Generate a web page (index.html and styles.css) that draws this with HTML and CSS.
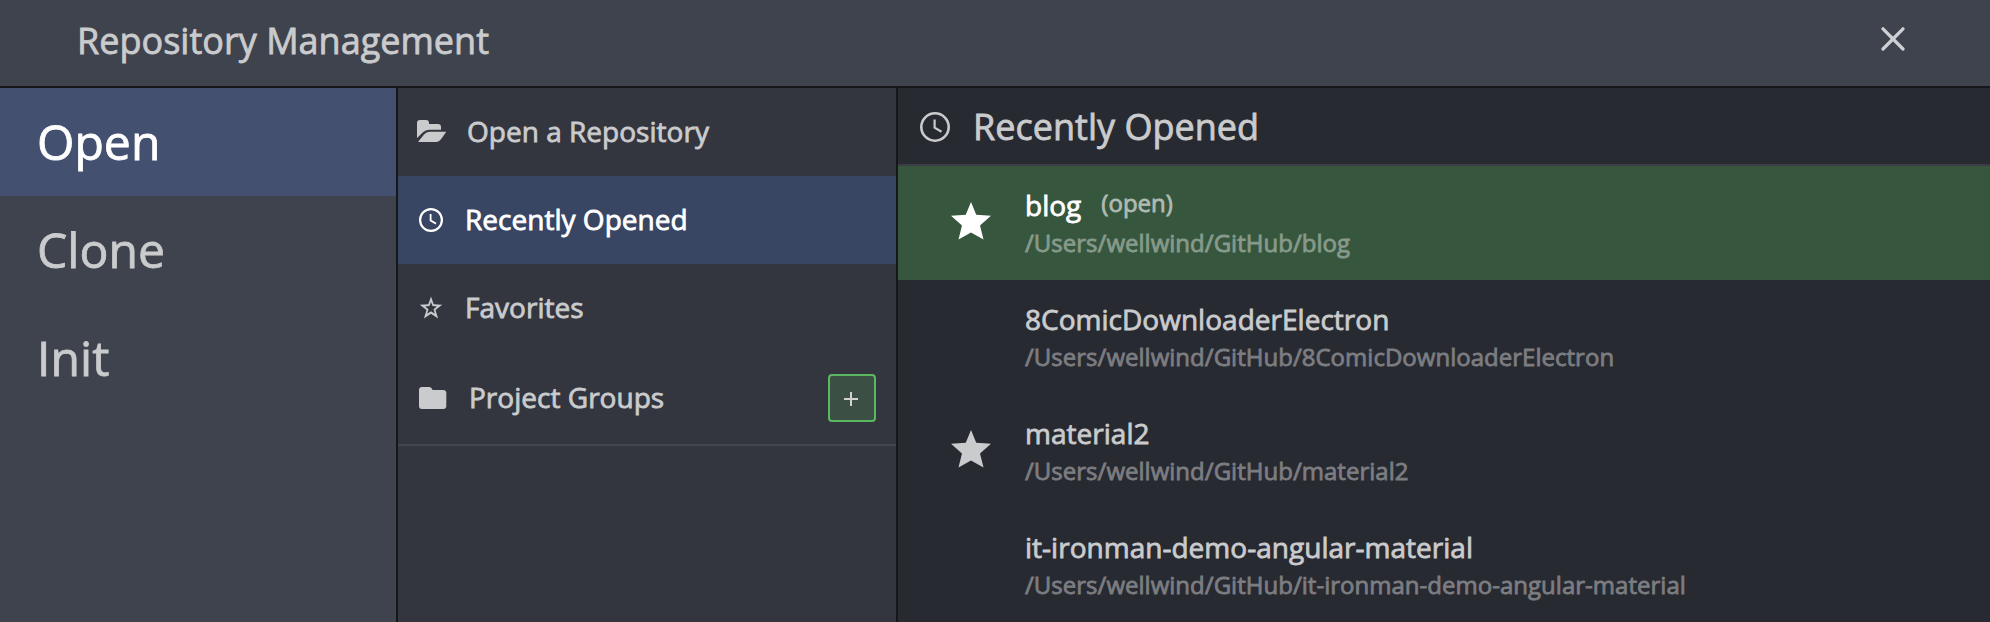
FILE: index.html
```
<!DOCTYPE html>
<html lang="en">
<head>
<meta charset="utf-8">
<title>Repository Management</title>
<link rel="stylesheet" href="styles.css">
</head>
<body>
<div class="app">
  <header class="header">
    <h1 class="title">Repository Management</h1>
    <svg class="close" width="24" height="25" viewBox="0 0 24 25"><path d="M2 1.800 22 22M22 1.800 2 22"/></svg>
  </header>
  <div class="body">
    <nav class="modes">
      <div class="mode active">Open</div>
      <div class="mode">Clone</div>
      <div class="mode">Init</div>
    </nav>
    <nav class="menu">
      <div class="item item-open">
        <svg class="solid icon-open" width="30" height="22" viewBox="0 0 30 22"><path d="M0 18V3Q0 0 3 0H9Q12 0 12 3V4H21Q24 4 24 7V9.700H12Q8.500 9.700 6 12.200L0 18Z"/><path d="M1 22 7 14.500Q9.500 11.800 12.500 11.800H29.300L24.500 18.500Q22 22 19 22Z"/></svg>
        <span>Open a Repository</span>
      </div>
      <div class="item active">
        <svg class="line icon-clock" width="24" height="24" viewBox="0 0 24 24"><circle cx="12" cy="12" r="10.900"/><path class="hands" d="M11.600 6V12.500L17 15.600"/></svg>
        <span>Recently Opened</span>
      </div>
      <div class="item">
        <svg class="solid icon-fav" width="24" height="24" viewBox="0 0 24 24"><path fill-rule="evenodd" d="M12 0.500 14.700 8.200 23.200 8.700 16.500 14 19.100 22.500 12 17.700 4.900 22.500 7.500 14 0.800 8.700 9.300 8.200ZM12 6 10.500 10.100 6.100 10.400 9.500 13.200 8.200 17.700 12 15.200 15.800 17.700 14.500 13.200 17.900 10.400 13.500 10.100Z"/></svg>
        <span>Favorites</span>
      </div>
      <div class="item groups">
        <svg class="solid icon-folder" width="28" height="22" viewBox="0 0 28 22"><path d="M3 0H10Q12.500 0 13.500 3H24Q27.300 3 27.300 6V19Q27.300 22 24.300 22H3Q0 22 0 19V3Q0 0 3 0Z"/></svg>
        <span>Project Groups</span>
        <button class="add" aria-label="Add group"><svg width="14" height="14" viewBox="0 0 14 14"><path d="M7 0V14M0 7H14"/></svg></button>
      </div>
    </nav>
    <main class="content">
      <div class="heading">
        <svg class="line icon-clock-lg" width="30" height="30" viewBox="0 0 30 30"><circle cx="15" cy="15" r="13.700"/><path class="hands" d="M14.600 7.500V15.600L21.500 19.800"/></svg>
        <h2>Recently Opened</h2>
      </div>
      <div class="repo current">
        <div class="mark"><svg class="solid" width="40" height="38" viewBox="0 0 39 38" preserveAspectRatio="none"><path d="M19.500 0 24.600 12.800 39 13.800 28.300 23.500 31.700 37.500 19.500 30.400 7.300 37.500 10.700 23.500 0 13.800 14.400 12.800Z"/></svg></div>
        <div class="info"><div class="name">blog<span class="state">(open)</span></div><div class="path">/Users/wellwind/GitHub/blog</div></div>
      </div>
      <div class="repo">
        <div class="mark"></div>
        <div class="info"><div class="name">8ComicDownloaderElectron</div><div class="path">/Users/wellwind/GitHub/8ComicDownloaderElectron</div></div>
      </div>
      <div class="repo">
        <div class="mark"><svg class="solid" width="40" height="38" viewBox="0 0 39 38" preserveAspectRatio="none"><path d="M19.500 0 24.600 12.800 39 13.800 28.300 23.500 31.700 37.500 19.500 30.400 7.300 37.500 10.700 23.500 0 13.800 14.400 12.800Z"/></svg></div>
        <div class="info"><div class="name">material2</div><div class="path">/Users/wellwind/GitHub/material2</div></div>
      </div>
      <div class="repo">
        <div class="mark"></div>
        <div class="info"><div class="name">it-ironman-demo-angular-material</div><div class="path">/Users/wellwind/GitHub/it-ironman-demo-angular-material</div></div>
      </div>
    </main>
  </div>
</div>
</body>
</html>
```
FILE: styles.css
```
* { box-sizing: border-box; }
body {
  margin: 0;
  font-family: "Open Sans", "Noto Sans", sans-serif;
  color: #cacbcd;
  -webkit-text-stroke: 0.8px currentColor;
  letter-spacing: 0.02px;
  white-space: nowrap;
}
h1, h2 { margin: 0; font-size: 36px; font-weight: 400; }
svg { display: block; flex: none; }
.solid { fill: currentColor; }
.line { fill: none; stroke: currentColor; stroke-width: 2.2; }
.hands { stroke-width: 1.8; }
.app { display: flex; flex-direction: column; height: 622px; overflow: hidden; background: #3f434e; }

.header { display: flex; justify-content: space-between; height: 88px; padding: 0 85px 0 77px; border-bottom: 2px solid #15171b; }
.title { line-height: 82px; }
.close { margin-top: 27px; fill: none; stroke: #cfd0d3; stroke-width: 3.2; stroke-linecap: round; }

.body { display: flex; flex: 1; min-height: 0; }
.modes { width: 398px; border-right: 2px solid #15171b; }
.mode { height: 108px; padding-left: 37px; font-size: 48.1px; line-height: 108px; }
.mode.active { background: #435070; color: #fff; }

.menu { width: 500px; background: #34363f; border-right: 2px solid #15171b; }
.item { display: flex; height: 88px; padding-left: 21px; font-size: 28px; line-height: 86px; }
.item.active { background: #384663; color: #fff; }
.icon-open { margin: 32px 20px 0 -2px; }
.icon-clock { margin: 31.500px 22px 0 0; }
.icon-fav { margin: 31.500px 22px 0 0; }
.icon-folder { margin: 35px 22px 0 0; }
.groups { height: 94px; padding-right: 20px; line-height: 90px; border-bottom: 2px solid #43454f; }
.add { display: flex; justify-content: center; align-items: center; width: 48px; height: 48px; margin: 22px 0 0 auto; padding: 2px 2px 0 0; background: #3c4f44; border: 2px solid #5cb860; border-radius: 4px; }
.add svg { fill: none; stroke: #cfd2d1; stroke-width: 2; }

.content { flex: 1; background: #282a32; }
.heading { display: flex; height: 78px; padding-left: 22px; line-height: 78px; border-bottom: 2px solid #3a3c46; }
.heading .hands { stroke-width: 2.2; }
.icon-clock-lg { margin: 23.500px 23px 0 0; stroke-width: 2.6; }
.repo { display: flex; height: 114px; padding-left: 53px; }
.repo.current { background: #37563e; color: #fff; }
.mark { width: 74px; padding-top: 36px; }
.info { padding-top: 21px; }
.name { height: 36px; font-size: 28px; line-height: 36px; }
.state { display: inline-block; margin-left: 20px; font-size: 24px; line-height: 30px; vertical-align: 4px; color: #afbbb2; }
.path { height: 36px; font-size: 24px; line-height: 40px; color: #7c7d81; }
.current .path { color: #879a8b; }
```
